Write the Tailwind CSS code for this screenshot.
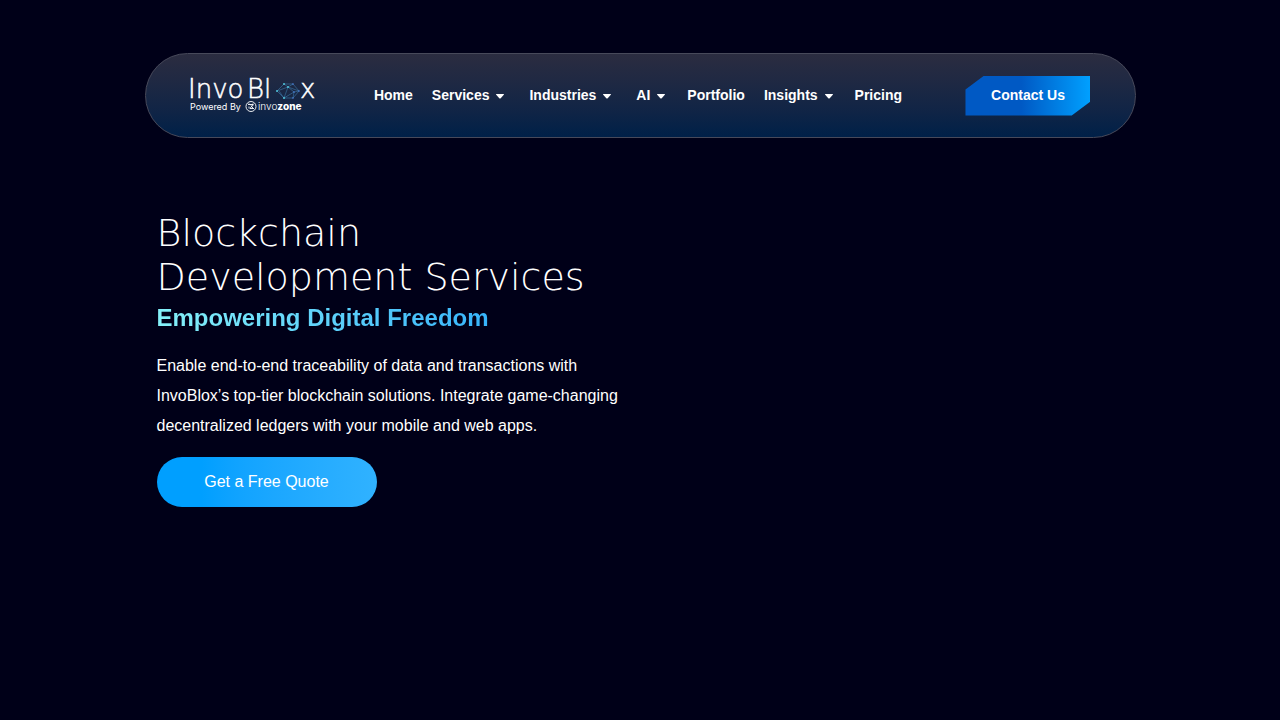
<!DOCTYPE html>
<html lang="en">
  <head>
    <meta charset="UTF-8" />
    <meta name="viewport" content="width=device-width, initial-scale=1.0" />
    <title>Blockchain Development Services | InvoBlox</title>
    <script src="https://cdn.jsdelivr.net/npm/@tailwindcss/browser@4"></script>
  </head>
  <body class="min-h-screen bg-[#000018] px-4 font-['Liberation_Sans',Arial,sans-serif] text-white">
    <header
      class="mx-auto mt-[53px] flex h-[85px] max-w-[991px] items-center justify-between rounded-full border border-[#47495a] bg-linear-to-b from-[#2b2c40] to-[#002048] px-11"
    >
      <a href="#" aria-label="InvoBlox, powered by invozone" class="block">
        <svg class="h-9 w-[126px] overflow-visible" viewBox="0 0 126 36" fill="none">
          <g class="fill-white stroke-white stroke-[0.5] font-['DejaVu_Sans',sans-serif] text-[26px] font-extralight">
            <text x="-2" y="20">Invo</text>
            <text x="57" y="20">Bl</text>
            <text x="110" y="20">x</text>
          </g>
          <!-- network mark standing in for the "o" -->
          <g stroke="#3d78a8" stroke-width="0.6">
            <path d="M87 13 94 6 103 6 109 13 103 20 94 20Z" />
            <path d="M87 13 98 9 109 13M94 6 98 9 103 6M94 20 89 13M94 20 98 9 104 14 103 20M104 14 109 13M94 20 104 14" />
          </g>
          <g fill="#4fc3d9">
            <circle cx="87" cy="13" r="1" />
            <circle cx="94" cy="6" r="1" />
            <circle cx="94" cy="20" r="1" />
            <circle cx="98" cy="9" r="1" />
          </g>
          <g fill="#4f7fe0">
            <circle cx="103" cy="6" r="0.8" />
            <circle cx="109" cy="13" r="0.8" />
            <circle cx="103" cy="20" r="0.8" />
            <circle cx="104" cy="14" r="0.8" />
          </g>
          <text x="0" y="32" class="fill-white font-['Inter',sans-serif] text-[9px]">Powered By</text>
          <text x="68" y="32" class="fill-white font-['Inter',sans-serif] text-[10px] font-light">
            invo<tspan class="font-extrabold">zone</tspan>
          </text>
          <g stroke="#fff" stroke-width="0.9">
            <circle cx="61" cy="28.5" r="5" />
            <path d="M58 26.5h5l-3 4h4M59 25.5l2 2M59 28.5v2M62 28.5l1 2M63 25.5v2" />
          </g>
        </svg>
      </a>

      <nav class="mr-[5px] flex items-center gap-[19px] pb-[2px] text-sm font-bold">
        <a href="#">Home</a>
        <button type="button" class="flex items-center gap-[6px] pr-[5px]">
          Services
          <svg class="mt-[3px] h-[6px] w-[10px]" viewBox="0 0 10 6" fill="currentColor"><path d="M1.5 1h7q1 0 .3.8L5.7 5.2q-.7.6-1.4 0L1.2 1.8Q.5 1 1.5 1Z" /></svg>
        </button>
        <button type="button" class="flex items-center gap-[6px] pr-[5px]">
          Industries
          <svg class="mt-[3px] h-[6px] w-[10px]" viewBox="0 0 10 6" fill="currentColor"><path d="M1.5 1h7q1 0 .3.8L5.7 5.2q-.7.6-1.4 0L1.2 1.8Q.5 1 1.5 1Z" /></svg>
        </button>
        <button type="button" class="flex items-center gap-[6px] pr-[2px]">
          AI
          <svg class="mt-[3px] h-[6px] w-[10px]" viewBox="0 0 10 6" fill="currentColor"><path d="M1.5 1h7q1 0 .3.8L5.7 5.2q-.7.6-1.4 0L1.2 1.8Q.5 1 1.5 1Z" /></svg>
        </button>
        <a href="#">Portfolio</a>
        <button type="button" class="flex items-center gap-[6px] pr-[2px]">
          Insights
          <svg class="mt-[3px] h-[6px] w-[10px]" viewBox="0 0 10 6" fill="currentColor"><path d="M1.5 1h7q1 0 .3.8L5.7 5.2q-.7.6-1.4 0L1.2 1.8Q.5 1 1.5 1Z" /></svg>
        </button>
        <a href="#">Pricing</a>
      </nav>

      <a
        href="#"
        class="flex h-10 w-[125px] items-center justify-center bg-linear-to-r from-[#0059c4] from-45% to-[#00a0ff] pb-[2px] text-sm font-bold [clip-path:polygon(15%_0,100%_0,100%_65%,85%_100%,0_100%,0_35%)]"
      >
        Contact Us
      </a>
    </header>

    <main class="mx-auto mt-[73px] max-w-[991px] px-3">
      <div class="max-w-[480px]">
        <h1 class="font-['DejaVu_Sans',sans-serif] text-[38px] leading-[44px] font-extralight">Blockchain<br />Development Services</h1>
        <h2
          class="mt-1 w-fit bg-linear-to-r from-[#84f0f8] to-[#36b4fb] bg-clip-text text-2xl leading-[30px] font-bold text-transparent"
        >
          Empowering Digital Freedom
        </h2>
        <p class="mt-[18px] text-base leading-[30px]">
          Enable end-to-end traceability of data and transactions with InvoBlox’s top-tier blockchain solutions.
          Integrate game-changing decentralized ledgers with your mobile and web apps.
        </p>
        <a
          href="#"
          class="mt-4 flex h-[50px] w-[220px] items-center justify-center rounded-full bg-linear-to-r from-[#009fff] from-20% to-[#30b2ff] text-base"
        >
          Get a Free Quote
        </a>
      </div>
    </main>
  </body>
</html>
